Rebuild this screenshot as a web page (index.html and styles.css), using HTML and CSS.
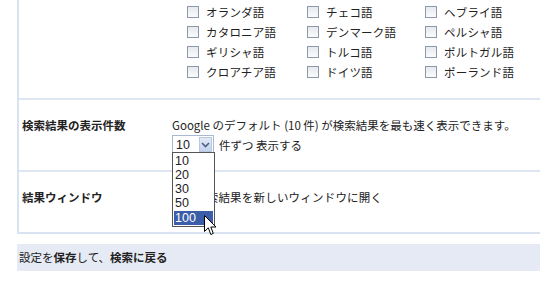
FILE: index.html
```html
<!DOCTYPE html>
<html lang="ja">
<head>
    <meta charset="UTF-8">
    <title>検索設定</title>
    <link rel="stylesheet" href="styles.css">
</head>
<body>

    <div class="settings">
        <!-- 言語 -->
        <div class="row row-first">
            <div class="row-label"></div>
            <div class="row-body">
                <div class="lang-grid">
                    <label class="lang"><span class="box"></span>オランダ語</label>
                    <label class="lang"><span class="box"></span>チェコ語</label>
                    <label class="lang"><span class="box"></span>ヘブライ語</label>
                    <label class="lang"><span class="box"></span>カタロニア語</label>
                    <label class="lang"><span class="box"></span>デンマーク語</label>
                    <label class="lang"><span class="box"></span>ペルシャ語</label>
                    <label class="lang"><span class="box"></span>ギリシャ語</label>
                    <label class="lang"><span class="box"></span>トルコ語</label>
                    <label class="lang"><span class="box"></span>ポルトガル語</label>
                    <label class="lang"><span class="box"></span>クロアチア語</label>
                    <label class="lang"><span class="box"></span>ドイツ語</label>
                    <label class="lang"><span class="box"></span>ポーランド語</label>
                </div>
            </div>
        </div>

        <!-- 表示件数 -->
        <div class="row row-count">
            <div class="row-label">検索結果の表示件数</div>
            <div class="row-body">
                <p class="note">Google のデフォルト (10 件) が検索結果を最も速く表示できます。</p>
                <div class="count-line">
                    <div class="select-wrap">
                        <div class="select">
                            <span class="select-value">10</span>
                            <span class="select-btn">
                                <svg width="9" height="6" viewBox="0 0 9 6"><path d="M1 1 L4.5 4.5 L8 1" fill="none" stroke="#4a5f86" stroke-width="1.6"/></svg>
                            </span>
                        </div>
                        <ul class="options">
                            <li>10</li>
                            <li>20</li>
                            <li>30</li>
                            <li>50</li>
                            <li class="active">100</li>
                        </ul>
                        <svg class="cursor" width="13" height="21" viewBox="0 0 13 21">
                            <path d="M0.5 0.5 L0.5 16.5 L4.3 12.8 L6.8 19.5 L9.3 18.4 L6.8 12 L12 12 Z" fill="#fff" stroke="#000" stroke-width="1"/>
                        </svg>
                    </div>
                    <span>件ずつ 表示する</span>
                </div>
            </div>
        </div>

        <!-- 結果ウィンドウ -->
        <div class="row row-window">
            <div class="row-label">結果ウィンドウ</div>
            <div class="row-body">
                <label class="lang"><span class="box"></span>検索結果を新しいウィンドウに開く</label>
            </div>
        </div>
    </div>

    <div class="save-bar">設定を<b>保存</b>して、<b>検索に戻る</b></div>

</body>
</html>
```

FILE: styles.css
```css
body {
    margin: 0;
    background-color: #fff;
    font-family: "Noto Sans CJK JP", "Liberation Sans", sans-serif;
    font-size: 11.5px;
    color: #222;
}

.settings {
    margin-left: 17px;
    border-left: 2px solid #d9e2f1;
    border-bottom: 2px solid #d9e2f1;
}

.row {
    display: flex;
    border-top: 2px solid #dfe6f3;
}

.row-first {
    border-top: none;
    height: 98px;
}

.row-label {
    width: 150px;
    padding-left: 3px;
    font-weight: bold;
}

.row-body {
    flex: 1;
}

/* Languages */
.lang-grid {
    display: grid;
    grid-template-columns: 120px 118px auto;
    row-gap: 4px;
    padding: 4px 0 0 15px;
}

.lang {
    display: flex;
    align-items: center;
    height: 16px;
    white-space: nowrap;
    letter-spacing: 0.2px;
}

.box {
    width: 10px;
    height: 10px;
    border: 1px solid #8d98a8;
    background: linear-gradient(#e6e9ee, #fafbfc);
    margin-right: 7px;
    flex-shrink: 0;
}

/* Result count */
.row-count {
    height: 70px;
}

.row-count .row-label,
.row-window .row-label {
    padding-top: 17px;
}

.note {
    margin: 17px 0 0 0;
    line-height: 16px;
}

.count-line {
    display: flex;
    align-items: center;
    margin-top: 2px;
}

.select-wrap {
    position: relative;
    margin-right: 5px;
}

.select {
    display: flex;
    align-items: center;
    justify-content: space-between;
    width: 37px;
    height: 17px;
    border: 1px solid #a9b9d3;
    background: #fff;
    padding-left: 3px;
}

.select-value {
    font-family: "Liberation Sans", sans-serif;
    font-size: 12.5px;
}

.select-btn {
    display: flex;
    align-items: center;
    justify-content: center;
    width: 13px;
    height: 15px;
    margin-right: 1px;
    background: linear-gradient(#e3eaf7, #c4d2ea);
    border: 1px solid #b9c8e2;
    box-sizing: border-box;
}

.options {
    position: absolute;
    left: 0;
    top: 17px;
    z-index: 2;
    width: 39px;
    margin: 0;
    padding: 1px;
    list-style: none;
    background: #fff;
    border: 1px solid #555;
}

.options li {
    height: 14px;
    line-height: 14px;
    padding-left: 1px;
    font-family: "Liberation Sans", sans-serif;
    font-size: 12.5px;
}

.options li.active {
    background-color: #3a5ea8;
    color: #fff;
    margin-top: 1px;
}

.cursor {
    position: absolute;
    left: 32px;
    top: 80px;
    z-index: 3;
}

/* Result window */
.row-window {
    height: 60px;
}

.row-window .row-body {
    padding-top: 17px;
}

.row-window .lang {
    margin-left: 4px;
}

/* Save bar */
.save-bar {
    margin: 10px 0 0 17px;
    height: 27px;
    line-height: 27px;
    padding-left: 2px;
    background-color: #e6eaf4;
}
```
